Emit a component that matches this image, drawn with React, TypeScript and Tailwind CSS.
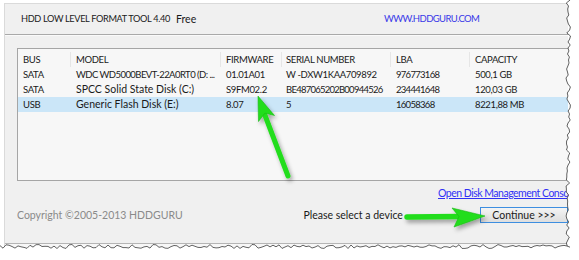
import React from "react";

const cols = "grid grid-cols-[53px_150px_61px_109px_79px_1fr]";

const rows = [
  ["SATA", "WDC WD5000BEVT-22A0RT0 (D: ...", "01.01A01", "W -DXW1KAA709892", "976773168", "500,1 GB"],
  ["SATA", "SPCC Solid State Disk (C:)", "S9FM02.2", "BE487065202B00944526", "234441648", "120,03 GB"],
  ["USB", "Generic Flash Disk (E:)", "8.07", "5", "16058368", "8221,88 MB"],
];

function rand(seed: number) {
  const x = Math.sin(seed * 12.9898) * 43758.5453;
  return x - Math.floor(x);
}

function TornEdges() {
  const right: string[] = [];
  for (let y = 0, i = 0; y <= 250; y += 3, i++) {
    const x = 566 + rand(i + 1) * 4.5;
    right.push(`${x.toFixed(1)},${y}`);
  }
  const bottom: string[] = [];
  for (let x = 0, i = 0; x <= 572; x += 3, i++) {
    const y = 244.5 + rand(i + 100) * 4;
    bottom.push(`${x},${y.toFixed(1)}`);
  }
  return (
    <svg className="absolute inset-0 pointer-events-none" width={579} height={260}>
      <polygon points={`${right.join(" ")} 579,250 579,0`} fill="#ffffff" />
      <polyline points={right.join(" ")} fill="none" stroke="#3a3a3a" strokeWidth={0.8} />
      <polygon points={`0,260 ${bottom.join(" ")} 579,250 579,260`} fill="#ffffff" />
      <polyline points={bottom.join(" ")} fill="none" stroke="#3a3a3a" strokeWidth={0.8} />
    </svg>
  );
}

function Arrows() {
  return (
    <svg className="absolute inset-0 pointer-events-none" width={579} height={260}>
      <defs>
        <filter id="sh" x="-50%" y="-50%" width="200%" height="200%">
          <feDropShadow dx="2" dy="3" stdDeviation="2" floodColor="#000" floodOpacity="0.35" />
        </filter>
      </defs>
      <g filter="url(#sh)">
        <line x1={288} y1={176} x2={264.5} y2={114} stroke="#22dd1c" strokeWidth={5} strokeLinecap="round" />
        <polygon points="258,96 274.5,115.5 265,113 258.5,121.5" fill="#22dd1c" stroke="#1ab814" strokeWidth={0.6} strokeLinejoin="round" />
        <line x1={407} y1={217} x2={460} y2={216.5} stroke="#22dd1c" strokeWidth={5.5} strokeLinecap="round" />
        <polygon points="485,216 452,208 459,216.5 454,227" fill="#22dd1c" stroke="#1ab814" strokeWidth={0.6} strokeLinejoin="round" />
      </g>
    </svg>
  );
}

const cellTrack = [
  ["tracking-[-0.35px]", "tracking-[-0.55px]", "tracking-[-0.35px]", "tracking-[-0.35px]", "tracking-[-0.7px]", "tracking-[-0.35px]"],
  ["tracking-[-0.35px]", "text-[10.5px]", "tracking-[-0.35px]", "tracking-[-0.75px]", "tracking-[-0.7px]", "tracking-[-0.35px]"],
  ["tracking-[-0.35px]", "text-[10.5px]", "tracking-[-0.35px]", "tracking-[-0.35px]", "tracking-[-0.7px]", "tracking-[-0.35px]"],
];

export default function App() {
  return (
    <div className="relative w-[579px] h-[260px] bg-white overflow-hidden font-['Lato',sans-serif] text-[10.5px] leading-none text-[#1a1a1a]">
      <div className="ml-[4px] mt-[3px] w-[564px] h-[244px] bg-[#f0f0f0] border-l border-t border-[#dadada] flex flex-col overflow-hidden">
        <div className="h-[30px] shrink-0 flex items-center pl-[16px] whitespace-nowrap">
          <span className="w-[155px] text-[9.2px] tracking-[-0.35px]">HDD LOW LEVEL FORMAT TOOL 4.40</span>
          <span className="w-[208px]">Free</span>
          <span className="text-[9.5px] tracking-[-0.6px] text-[#3838e8]">WWW.HDDGURU.COM</span>
        </div>
        <div className="h-[2px] shrink-0 border-t border-[#a9a9a9] border-b border-b-[#fafafa]" />
        <div className="ml-[12px] mt-[12px] w-[560px] h-[133px] shrink-0 border border-[#a5a5a5] bg-[#f7f7f7] pt-[3px] whitespace-nowrap text-[9.5px]">
          <div className={`${cols} h-[15px] items-center tracking-[-0.35px]`}>
            <span className="pl-[5px] h-full flex items-center border-r border-[#e6e6e6]">BUS</span>
            <span className="pl-[5px] h-full flex items-center border-r border-[#e6e6e6]">MODEL</span>
            <span className="pl-[5px] h-full flex items-center border-r border-[#e6e6e6]">FIRMWARE</span>
            <span className="pl-[4px] h-full flex items-center border-r border-[#e6e6e6]">SERIAL NUMBER</span>
            <span className="pl-[5px] h-full flex items-center border-r border-[#e6e6e6]">LBA</span>
            <span className="pl-[5px] h-full flex items-center">CAPACITY</span>
          </div>
          {rows.map((r, i) => (
            <div key={i} className={`${cols} h-[15px] items-center ${i === 2 ? "bg-[#cbe6f8]" : ""}`}>
              {r.map((c, j) => (
                <span key={j} className={`${j === 3 ? "pl-[4px]" : "pl-[5px]"} ${cellTrack[i][j]}`}>{c}</span>
              ))}
            </div>
          ))}
        </div>
        <div className="h-[14px] mt-[5px] shrink-0 flex items-center pl-[433px] whitespace-nowrap">
          <span className="text-[#3030f5] underline underline-offset-1 tracking-[-0.5px]">Open Disk Management Console</span>
        </div>
        <div className="h-[16px] mt-[7px] shrink-0 flex items-center pl-[12px] whitespace-nowrap">
          <span className="w-[287px] text-[#8a8a8a]">Copyright ©2005-2013 HDDGURU</span>
          <span className="w-[177px]">Please select a device</span>
          <span className="w-[88px] h-[16px] shrink-0 flex items-center justify-center border border-[#3d8ee0] bg-gradient-to-b from-[#f4f4f4] to-[#dedede]">Continue &gt;&gt;&gt;</span>
        </div>
        <div className="mt-auto h-[4px] shrink-0 border-t border-[#b5b5b5] bg-[#f7f7f7]" />
      </div>
      <TornEdges />
      <Arrows />
    </div>
  );
}
